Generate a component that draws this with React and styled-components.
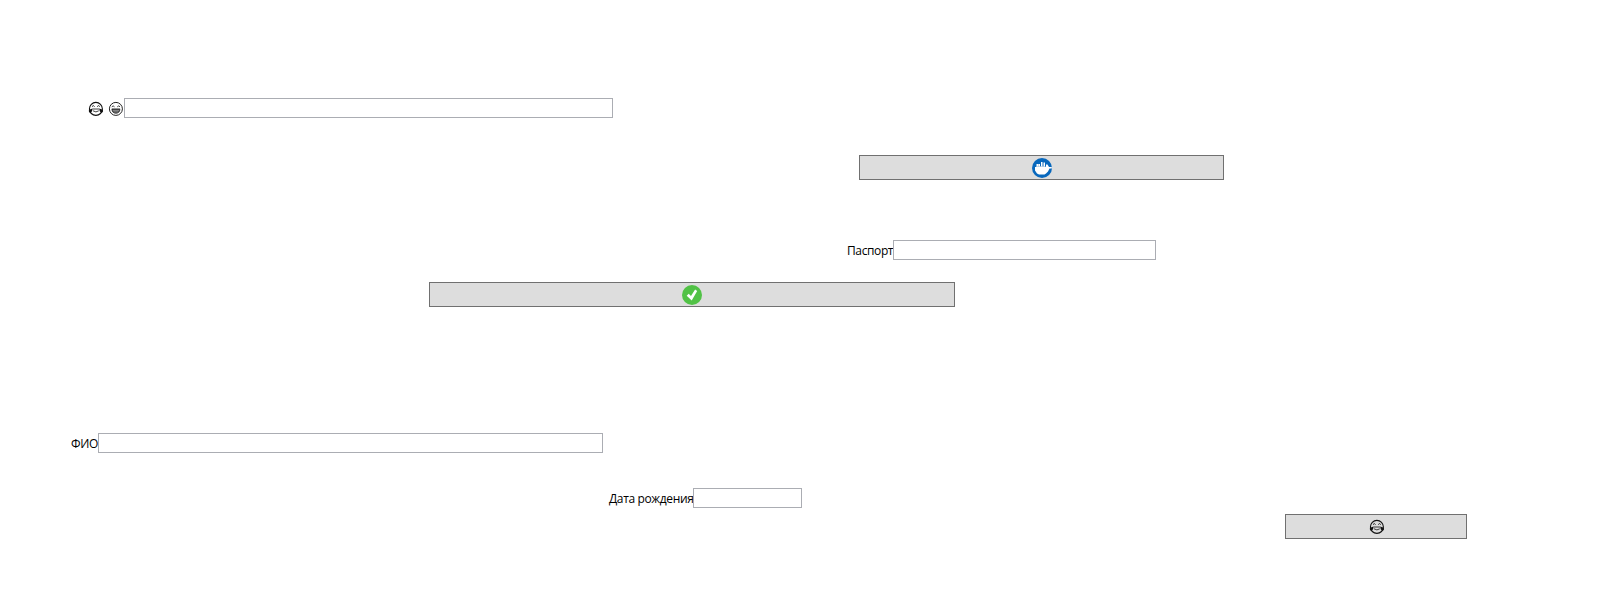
import React from "react";
import styled, { createGlobalStyle } from "styled-components";

const GlobalStyle = createGlobalStyle`
  * { box-sizing: border-box; }
  body { margin: 0; background: #fff; }
`;

const Form = styled.form`
  display: flex;
  flex-direction: column;
  width: 1602px;
  height: 604px;
  padding-top: 98px;
  background: #fff;
  color: #000;
  font: 12px/16px "Open Sans", "Noto Sans", sans-serif;
`;

const Row = styled.div`
  display: flex;
  flex: none;
  margin-top: ${(p) => p.$gap || 0}px;
  padding-left: ${(p) => p.$indent}px;
`;

const Label = styled.label`
  display: flex;
  flex: none;
  align-items: center;
  width: ${(p) => p.$width}px;
  height: 20px;
  padding-top: 2px;
  letter-spacing: ${(p) => p.$spacing || 0}px;
  white-space: nowrap;
`;

const IconLabel = styled(Label)`
  gap: 5px;
  padding-top: 1px;
`;

const Input = styled.input`
  flex: none;
  width: ${(p) => p.$width}px;
  height: 20px;
  padding: 0 2px;
  border: 1px solid #abadb3;
  border-radius: 0;
  background: #fff;
  font: inherit;
  outline: none;
`;

const Button = styled.button`
  display: flex;
  flex: none;
  align-items: center;
  justify-content: center;
  width: ${(p) => p.$width}px;
  height: 25px;
  padding: 0;
  border: 1px solid #707070;
  border-radius: 0;
  background: #ddd;
  color: #000;
`;

const Icon = styled.svg`
  display: block;
  flex: none;
  width: ${(p) => p.$size}px;
  height: ${(p) => p.$size}px;
`;

const JoyFace = () => (
  <Icon $size={15} viewBox="-0.4 -0.4 15 15" fill="none" stroke="#111">
    <circle cx="7.5" cy="7.5" r="6.5" strokeWidth="1.1" />
    <path d="M3.6 5.2Q4.9 3.2 6.2 5.2M8.8 5.2q1.3-2 2.6 0" strokeWidth=".9" />
    <path d="M4.2 7.6h6.6M4.6 9.4q2.9 2.2 5.8 0" strokeWidth=".8" />
    <path d="M4.1 7.2.7 8.4q-.9 2.2.9 2.9 2.4.1 2.5-4.1zM10.9 7.2l3.4 1.2q.9 2.2-.9 2.9-2.4.1-2.5-4.1z" fill="#111" stroke="none" />
  </Icon>
);

const GrinFace = () => (
  <Icon $size={15} viewBox="-0.4 -0.4 15 15" fill="none" stroke="#222">
    <circle cx="7.5" cy="7.5" r="6.5" strokeWidth="1" />
    <path d="M3.4 5.4q1.3-1.8 2.7 0M8.9 5.4q1.4-1.8 2.7 0" strokeWidth=".9" />
    <path d="M3.5 7.5h8q-.2 4.3-4 4.3t-4-4.3z" fill="#444" strokeWidth=".8" />
    <path d="M4.4 9h6.2M5 10.5h5" stroke="#bbb" strokeWidth=".6" />
  </Icon>
);

const DockerLogo = () => (
  <Icon $size={20} viewBox="0 0 20 20">
    <circle cx="10" cy="10" r="10" fill="#0868bd" />
    <path d="M4.5 9V6H8v3h1V4h1.5v5h1V4.5H13V9h1V6.5h1.5L17 9h2.8v1.5h-2.3l-1.5 3-2 2-1.5 1H7l-2-1-2-3V9z" fill="#fff" />
    <path d="M4.5 8.5h9M6.5 6v3" stroke="#b8cfe5" strokeWidth=".8" />
  </Icon>
);

const CheckMark = () => (
  <Icon $size={20} viewBox="0 0 20 20">
    <circle cx="10" cy="10" r="10" fill="#51c246" />
    <path d="M4.7 10.7l2-2 2.3 2.3 4.1-6.6 2.1 1.6-5.5 9.4z" fill="#fff" />
  </Icon>
);

export default function App() {
  return (
    <>
      <GlobalStyle />
      <Form onSubmit={(e) => e.preventDefault()}>
        <Row $indent={88}>
          <IconLabel htmlFor="mood" $width={36}>
            <JoyFace />
            <GrinFace />
          </IconLabel>
          <Input id="mood" $width={489} />
        </Row>
        <Row $gap={37} $indent={859}>
          <Button $width={365}><DockerLogo /></Button>
        </Row>
        <Row $gap={60} $indent={847}>
          <Label htmlFor="passport" $width={46} $spacing={-0.38}>Паспорт</Label>
          <Input id="passport" $width={263} />
        </Row>
        <Row $gap={22} $indent={429}>
          <Button $width={526}><CheckMark /></Button>
        </Row>
        <Row $gap={126} $indent={71}>
          <Label htmlFor="name" $width={27} $spacing={-0.4}>ФИО</Label>
          <Input id="name" $width={505} />
        </Row>
        <Row $gap={35} $indent={609}>
          <Label htmlFor="birth" $width={84} $spacing={-0.36}>Дата рождения</Label>
          <Input id="birth" $width={109} />
        </Row>
        <Row $gap={6} $indent={1285}>
          <Button $width={182}><JoyFace /></Button>
        </Row>
      </Form>
    </>
  );
}
